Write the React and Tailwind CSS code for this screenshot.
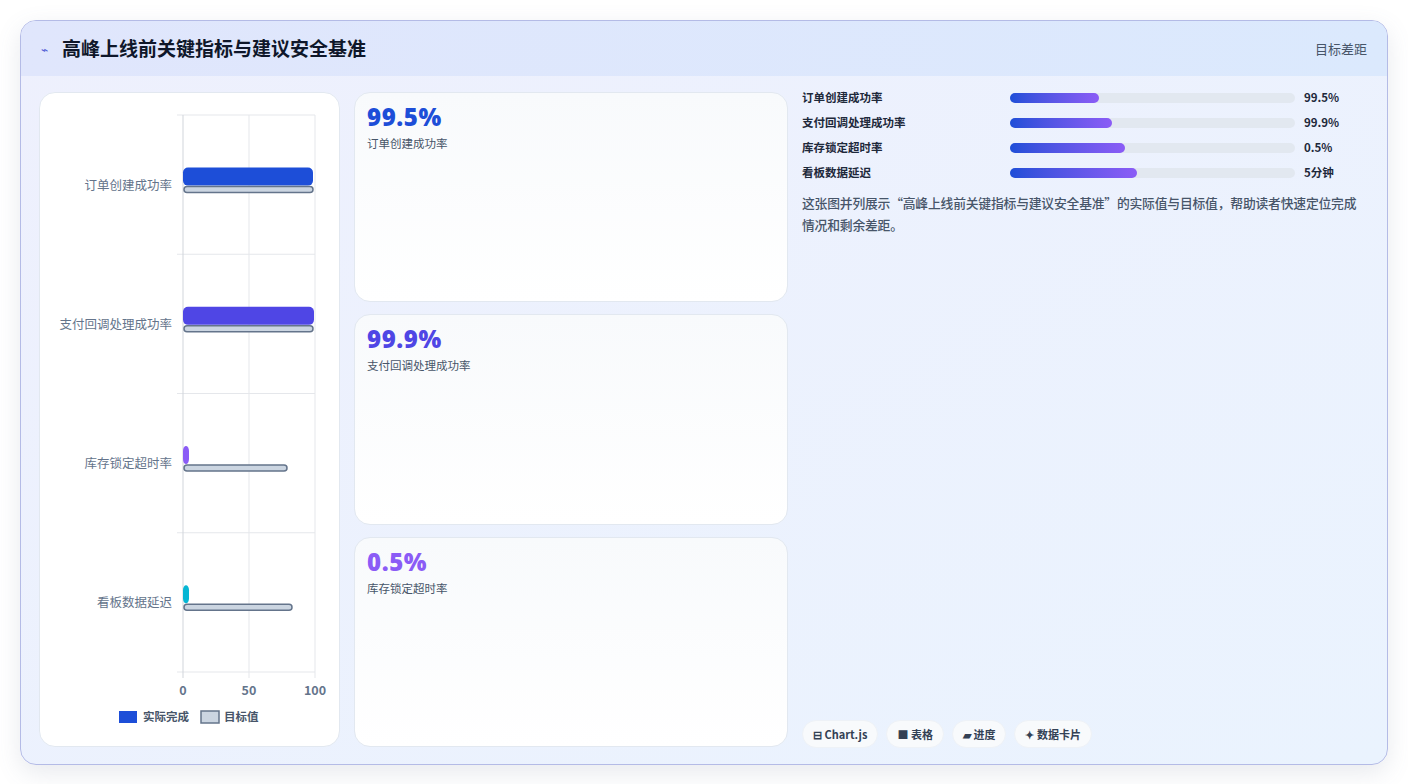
const font = { fontFamily: '"Noto Sans CJK SC", "Noto Sans", sans-serif' };

const rows = [
  { name: "订单创建成功率", value: "99.5%", fill: 89, actual: 130, target: 130, color: "#1d4ed8" },
  { name: "支付回调处理成功率", value: "99.9%", fill: 102, actual: 131, target: 130, color: "#4f46e5" },
  { name: "库存锁定超时率", value: "0.5%", fill: 115, actual: 6, target: 104, color: "#8b5cf6" },
  { name: "看板数据延迟", value: "5分钟", fill: 127, actual: 6, target: 109, color: "#06b6d4" },
];

function Chart() {
  const x0 = 143, x1 = 275, top = 22;
  return (
    <svg width="301" height="653" className="block">
      {[0, 1, 2, 3, 4].map((i) => (
        <line key={i} x1={x0 - 6} x2={x1} y1={top + i * 139.25} y2={top + i * 139.25} stroke="#e5e7eb" />
      ))}
      {[x0, x0 + 66, x1].map((x, i) => (
        <line key={i} x1={x} x2={x} y1={top} y2={top + 557 + 6} stroke={i === 0 ? "#d1d5db" : "#e5e7eb"} />
      ))}
      {rows.map((r, i) => {
        const c = top + 69.6 + i * 139.25;
        return (
          <g key={i}>
            <text x={132} y={c + 5} textAnchor="end" fontSize="12.5" fill="#64748b" style={font}>{r.name}</text>
            <rect x={x0} y={c - 17} width={r.actual} height={18} rx={5} fill={r.color} />
            <rect x={x0 + 1} y={c + 2} width={r.target - 1} height={6} rx={3} fill="#cbd5e1" stroke="#64748b" strokeWidth="1.5" />
          </g>
        );
      })}
      {[["0", x0], ["50", x0 + 66], ["100", x1]].map(([t, x]) => (
        <text key={t} x={x} y={602} textAnchor="middle" fontSize="12.5" fontWeight="700" fill="#64748b" style={font}>{t}</text>
      ))}
      <rect x={79} y={618} width={18} height={12} fill="#1d4ed8" />
      <text x={103} y={628} fontSize="11.5" fontWeight="700" fill="#475569" style={font}>实际完成</text>
      <rect x={161} y={618} width={18} height={12} fill="#cbd5e1" stroke="#64748b" strokeWidth="1.5" />
      <text x={184} y={628} fontSize="11.5" fontWeight="700" fill="#475569" style={font}>目标值</text>
    </svg>
  );
}

export default function App() {
  return (
    <div className="w-[1408px] h-[784px] bg-white p-5" style={font}>
      <div className="h-[745px] rounded-2xl border border-[#b4bbe6] overflow-hidden flex flex-col bg-gradient-to-br from-[#eef0fd] to-[#eaf3fe] shadow-[0_8px_24px_rgba(100,116,139,0.15)]">
        <div className="h-[55px] shrink-0 flex items-center justify-between px-5 bg-gradient-to-r from-[#e0e6fc] to-[#dbe9fd]">
          <div className="flex items-center gap-3.5">
            <span className="text-[#4f5bd5] text-xs">⌁</span>
            <h1 className="text-[19px] font-bold text-[#0f172a]">高峰上线前关键指标与建议安全基准</h1>
          </div>
          <span className="text-[13px] text-[#475569]">目标差距</span>
        </div>
        <div className="flex-1 grid grid-cols-[301px_434px_1fr] gap-[14px] pl-[18px] pr-5 pt-4 pb-[18px]">
          <div className="bg-white rounded-2xl border border-[#e2e8f0] overflow-hidden">
            <Chart />
          </div>
          <div className="flex flex-col gap-3">
            {rows.slice(0, 3).map((r) => (
              <div key={r.name} className="flex-1 rounded-2xl border border-[#e2e8f0] bg-gradient-to-b from-[#f8fafc] to-white px-[12px] pt-2">
                <div className="text-[24px] font-extrabold leading-8 tracking-wide" style={{ color: r.color, fontFamily: '"Open Sans", sans-serif' }}>{r.value}</div>
                <div className="text-[11.5px] text-[#475569] mt-0.5">{r.name}</div>
              </div>
            ))}
          </div>
          <div className="flex flex-col pr-0.5">
            <div className="flex flex-col gap-[7px] -mt-[3px]">
              {rows.map((r) => (
                <div key={r.name} className="flex items-center h-[18px]">
                  <span className="w-[208px] text-[11.5px] font-bold text-[#1e293b]">{r.name}</span>
                  <div className="w-[285px] h-[10px] rounded-full bg-[#e2e8f0]">
                    <div className="h-full rounded-full bg-gradient-to-r from-[#1d4ed8] to-[#8b5cf6]" style={{ width: r.fill }} />
                  </div>
                  <span className="ml-[9px] text-[11.5px] font-bold text-[#1e293b]">{r.value}</span>
                </div>
              ))}
            </div>
            <p className="mt-[10px] text-[12.8px] leading-[22px] font-medium text-[#475569] tracking-[-0.2px]">
              这张图并列展示“高峰上线前关键指标与建议安全基准”的实际值与目标值，帮助读者快速定位完成情况和剩余差距。
            </p>
            <div className="mt-auto flex gap-2 -mb-px">
              {["⊟ Chart.js", "■ 表格", "▰ 进度", "✦ 数据卡片"].map((t) => (
                <span key={t} className="h-[28px] px-2.5 flex items-center rounded-full bg-[#f8fafc] border border-[#eef2f7] text-[11px] font-bold text-[#334155]">{t}</span>
              ))}
            </div>
          </div>
        </div>
      </div>
    </div>
  );
}
